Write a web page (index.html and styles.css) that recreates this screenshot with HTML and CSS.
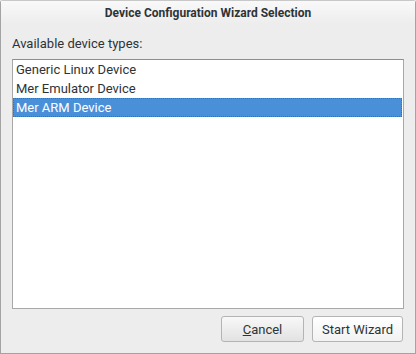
FILE: index.html
```html
<!DOCTYPE html>
<html>
<head>
<meta charset="utf-8">
<link rel="stylesheet" href="styles.css">
</head>
<body>
<div class="window">
  <div class="titlebar">Device Configuration Wizard Selection</div>
  <div class="content">
    <div class="label">Available device types:</div>
    <div class="list">
      <div class="row">Generic Linux Device</div>
      <div class="row">Mer Emulator Device</div>
      <div class="row selected">Mer ARM Device</div>
    </div>
    <div class="buttons">
      <button class="btn cancel"><span class="mn">C</span>ancel</button>
      <button class="btn start">Start Wizard</button>
    </div>
  </div>
</div>
</body>
</html>
```
FILE: styles.css
```css
* { box-sizing: border-box; }
html, body { margin: 0; padding: 0; }
body {
  width: 416px;
  height: 354px;
  font-family: Roboto, "Liberation Sans", sans-serif;
  font-size: 13px;
  color: #2e3436;
  background: #ededed;
}
.window {
  width: 416px;
  height: 354px;
  display: flex;
  flex-direction: column;
  border: 1px solid #a3a3a3;
  border-top-color: #c8c8c8;
  border-radius: 3px 3px 0 0;
  background: #ededed;
}
.titlebar {
  height: 23px;
  flex: none;
  display: flex;
  align-items: center;
  justify-content: center;
  font-weight: bold;
  font-size: 12px;
  background: linear-gradient(#f9f9f9, #ededed);
  padding-top: 1px;
}
.content {
  flex: 1;
  display: flex;
  flex-direction: column;
  padding: 12px 11px 11px 11px;
}
.label {
  height: 16px;
  line-height: 16px;
  margin-bottom: 7px;
}
.list {
  flex: 1;
  background: #ffffff;
  border: 1px solid #a8a8a8;
  border-top-color: #8e8e8e;
  display: flex;
  flex-direction: column;
}
.row {
  height: 19px;
  line-height: 19px;
  padding-left: 3px;
}
.row.selected {
  background: #4a90d9;
  color: #ffffff;
  outline: 1px dotted #3470b8;
  outline-offset: -1px;
  margin-right: 1px;
}
.buttons {
  margin-top: 7px;
  display: flex;
  justify-content: flex-end;
  gap: 8px;
}
.btn {
  height: 26px;
  font-family: inherit;
  font-size: 13px;
  color: #2e3436;
  border: 1px solid #b4b4b4;
  border-radius: 3px;
  padding: 0;
  margin: 0;
}
.cancel {
  width: 83px;
  background: linear-gradient(#f8f8f8, #e2e2e2);
  margin-right: 0;
}
.start {
  width: 91px;
  background: linear-gradient(#ffffff, #f2f2f2);
  margin-right: 1px;
}
.mn {
  text-decoration: underline;
}
```
